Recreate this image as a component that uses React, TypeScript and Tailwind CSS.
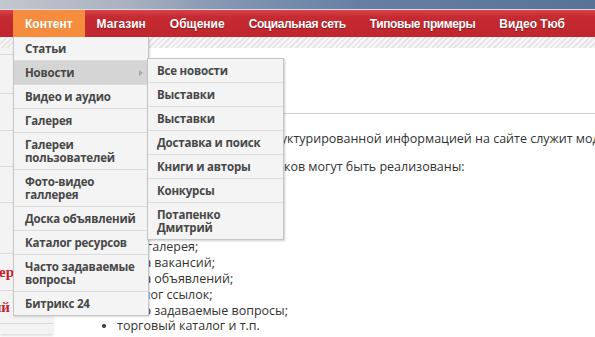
import React from "react";

const navItems = [
  { label: "Контент", tight: false },
  { label: "Магазин", tight: false },
  { label: "Общение", tight: false },
  { label: "Социальная сеть", tight: true },
  { label: "Типовые примеры", tight: true },
  { label: "Видео Тюб", tight: false },
];

// first level of the "Контент" dropdown
const contentMenu: { label: React.ReactNode; active?: boolean; sub?: boolean }[] = [
  { label: "Статьи" },
  { label: "Новости", active: true, sub: true },
  { label: "Видео и аудио" },
  { label: "Галерея" },
  {
    label: (
      <>
        Галереи
        <br />
        пользователей
      </>
    ),
  },
  {
    label: (
      <>
        Фото-видео
        <br />
        галлерея
      </>
    ),
  },
  { label: "Доска объявлений" },
  { label: "Каталог ресурсов" },
  {
    label: (
      <>
        Часто задаваемые
        <br />
        вопросы
      </>
    ),
  },
  { label: "Битрикс 24" },
];

const newsMenu: React.ReactNode[] = [
  "Все новости",
  "Выставки",
  "Выставки",
  "Доставка и поиск",
  "Книги и авторы",
  "Конкурсы",
  <>
    Потапенко
    <br />
    Дмитрий
  </>,
];

const listItems = [
  "новостная лента;",
  "каталог продукции;",
  "статьи;",
  "фотогалерея;",
  "доска вакансий;",
  "доска объявлений;",
  "каталог ссылок;",
  "часто задаваемые вопросы;",
  "торговый каталог и т.п.",
];

// left column rows, only their right tail shows from under the menu
const sideRows = [
  { h: "h-[7px]", text: "", w: "w-[14px]" },
  { h: "h-[39px]", text: "", w: "w-[14px]" },
  { h: "h-[37px]", text: "", w: "w-[14px]" },
  { h: "h-[36px]", text: "", w: "w-[14px]" },
  { h: "h-[36px]", text: "", w: "w-[14px]" },
  { h: "h-[51px]", text: "", w: "w-[14px]" },
  { h: "h-[37px]", text: "Карьер", w: "w-[14px]" },
  { h: "h-[33px]", text: "Новый", w: "w-[10px]" },
];

export default function App() {
  return (
    <div
      className="relative w-[595px] h-[337px] overflow-hidden bg-white"
      style={{ fontFamily: '"Open Sans", "Liberation Sans", sans-serif' }}
    >
      {/* header picture strip */}
      <div className="h-[10px] bg-[linear-gradient(90deg,#c3c7ce_0%,#aab3c2_20%,#8193b0_40%,#6680a5_60%,#587398_100%)] border-b border-[#d7dbe2]" />

      {/* main nav */}
      <nav className="h-[27px] flex pl-[13px] bg-[linear-gradient(180deg,#d9434b_0%,#c62a32_25%,#bf262d_100%)] font-['Liberation_Sans',sans-serif]">
        {navItems.map((item, i) => (
          <div
            key={item.label}
            className={`px-3 flex items-center text-[12px] font-bold text-white ${
              item.tight ? "tracking-[-0.4px]" : ""
            } ${i === 0 ? "bg-[#f68c3d]" : "[text-shadow:0_1px_1px_rgba(90,0,0,0.5)]"}`}
          >
            {item.label}
          </div>
        ))}
      </nav>

      {/* hatched band under the nav */}
      <div className="h-[11px] bg-[repeating-linear-gradient(135deg,#e6e6e6_0px,#e6e6e6_2px,#f7f7f7_2px,#f7f7f7_4px)]" />

      <div className="flex">
        {/* left column */}
        <aside className="w-[53px] shrink-0 bg-[#f3f3f3] shadow-[0_2px_2px_rgba(0,0,0,0.12)]">
          {sideRows.map((r, i) => (
            <div
              key={i}
              className={`${r.h} border-b border-[#d9d9d9] flex items-center`}
            >
              <div className={`${r.w} flex justify-end overflow-hidden`}>
                {r.text && (
                  <span className="whitespace-nowrap text-[15px] font-bold text-[#c8202b] font-['Liberation_Serif',serif]">
                    {r.text}
                  </span>
                )}
              </div>
            </div>
          ))}
        </aside>

        {/* content */}
        <main className="flex-1 min-w-0 text-[12.5px] text-[#333]">
          <div className="h-[66px] border-b border-[#cfcfcf]" />
          <div className="pl-[44px] whitespace-nowrap">
            <p className="mt-[17px] leading-4">
              Для хранения и работы со структурированной информацией на сайте служит модуль
              Информационные блоки.
            </p>
            <p className="mt-[12px] leading-4">
              Силами информационных блоков могут быть реализованы:
            </p>
            <ul className="mt-[17px] pl-[20px] list-disc leading-[15.8px]">
              {listItems.map((li) => (
                <li key={li}>{li}</li>
              ))}
            </ul>
          </div>
        </main>
      </div>

      {/* Контент dropdown */}
      <div className="absolute left-[13px] top-[37px] w-[136px] bg-[#f4f4f4] border border-t-0 border-[#c4c4c4] shadow-[1px_1px_2px_rgba(0,0,0,0.15)] text-[11.5px] tracking-[-0.2px] font-bold text-[#474747] leading-[13px] whitespace-nowrap">
        {contentMenu.map((m, i) => (
          <div
            key={i}
            className={`relative px-[11px] py-[5px] border-b border-[#dddddd] last:border-b-0 ${
              m.active ? "bg-[#d5d5d5]" : ""
            }`}
          >
            {m.label}
            {m.sub && (
              <span className="absolute right-[5px] top-[9px] w-0 h-0 border-y-[3px] border-y-transparent border-l-[4px] border-l-[#a9a9a9]" />
            )}
          </div>
        ))}
      </div>

      {/* Новости submenu */}
      <div className="absolute left-[147px] top-[58px] w-[137px] bg-[#f4f4f4] border border-[#c4c4c4] shadow-[1px_1px_2px_rgba(0,0,0,0.2)] text-[11.5px] tracking-[-0.2px] font-bold text-[#474747] leading-[13px] whitespace-nowrap">
        {newsMenu.map((m, i) => (
          <div
            key={i}
            className="px-[9px] py-[5px] border-b border-[#dddddd] last:border-b-0"
          >
            {m}
          </div>
        ))}
      </div>
    </div>
  );
}
